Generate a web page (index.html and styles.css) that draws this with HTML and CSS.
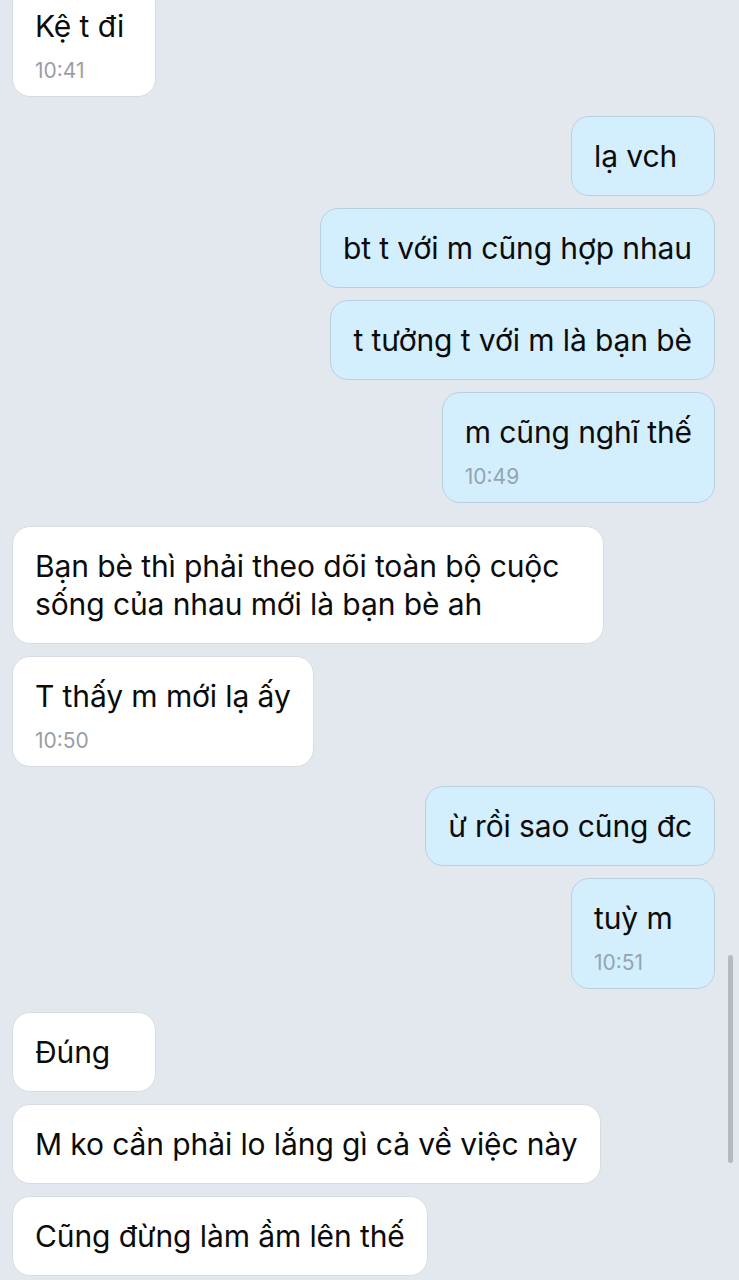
FILE: index.html
```html
<!DOCTYPE html>
<html lang="vi">
<head>
<meta charset="utf-8">
<title>Chat</title>
<link rel="stylesheet" href="styles.css">
</head>
<body>
<main class="chat">
  <div class="msg in first">
    <div class="text">Kệ t đi</div>
    <div class="time">10:41</div>
  </div>
  <div class="msg out group">
    <div class="text">lạ vch</div>
  </div>
  <div class="msg out">
    <div class="text">bt t với m cũng hợp nhau</div>
  </div>
  <div class="msg out">
    <div class="text">t tưởng t với m là bạn bè</div>
  </div>
  <div class="msg out">
    <div class="text">m cũng nghĩ thế</div>
    <div class="time">10:49</div>
  </div>
  <div class="msg in group-lg">
    <div class="text">Bạn bè thì phải theo dõi toàn bộ cuộc sống của nhau mới là bạn bè ah</div>
  </div>
  <div class="msg in">
    <div class="text">T thấy m mới lạ ấy</div>
    <div class="time">10:50</div>
  </div>
  <div class="msg out group">
    <div class="text">ừ rồi sao cũng đc</div>
  </div>
  <div class="msg out">
    <div class="text">tuỳ m</div>
    <div class="time">10:51</div>
  </div>
  <div class="msg in group-lg">
    <div class="text">Đúng</div>
  </div>
  <div class="msg in">
    <div class="text">M ko cần phải lo lắng gì cả về việc này</div>
  </div>
  <div class="msg in">
    <div class="text">Cũng đừng làm ầm lên thế</div>
  </div>
</main>
<div class="scrollbar"></div>
</body>
</html>
```

FILE: styles.css
```css
html, body {
  margin: 0;
  padding: 0;
  background: #e3e8ef;
  height: 100%;
  overflow: hidden;
}

body {
  font-family: Inter, "Noto Sans", sans-serif;
  color: #0b0b0b;
  position: relative;
}

.chat {
  display: flex;
  flex-direction: column;
  gap: 12px;
  padding: 0 24px 0 12px;
}

.msg {
  box-sizing: border-box;
  min-width: 144px;
  max-width: 592px;
  padding: 20px 22px;
  border-radius: 18px;
  border: 1px solid #d6dbe1;
  background: #ffffff;
}

.msg.first {
  margin-top: -14px;
}

.msg.group {
  margin-top: 7px;
}

.msg.group-lg {
  margin-top: 11px;
}

.msg.in {
  align-self: flex-start;
}

.msg.out {
  align-self: flex-end;
  background: #d3eefd;
  border-color: #b9d0e0;
}

.text {
  font-size: 30px;
  line-height: 38px;
  letter-spacing: -0.1px;
}

.time {
  margin-top: 13px;
  margin-bottom: -8px;
  font-size: 21px;
  line-height: 26px;
  color: #9a9fa5;
}

.msg.out .time {
  color: #93a5b2;
}

.scrollbar {
  position: absolute;
  left: 728px;
  top: 955px;
  width: 5px;
  height: 208px;
  border-radius: 3px;
  background: #b4bac1;
}
```
